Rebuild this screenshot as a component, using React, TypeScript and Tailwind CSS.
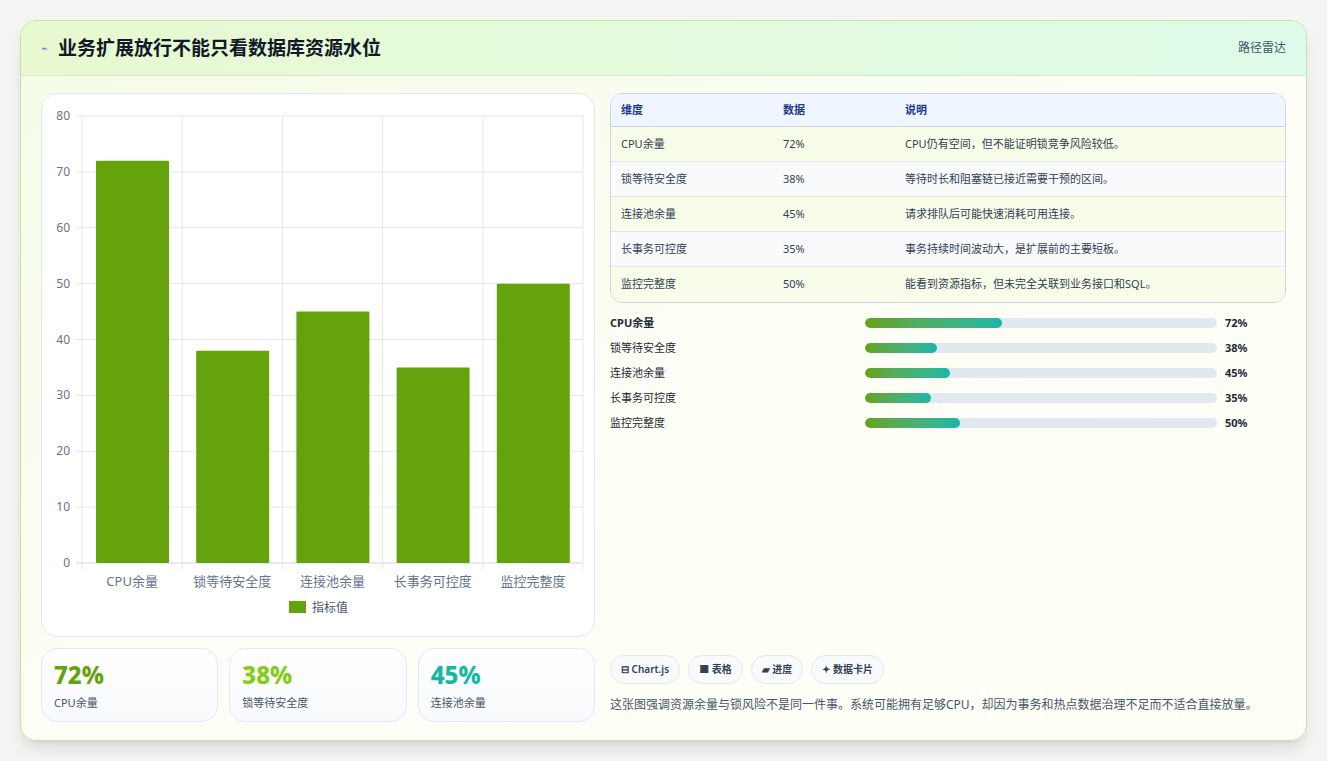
const font = { fontFamily: '"Noto Sans", "Noto Sans CJK SC", sans-serif' }

const data = [
  { name: 'CPU余量', v: 72, note: 'CPU仍有空间，但不能证明锁竞争风险较低。', w: 137 },
  { name: '锁等待安全度', v: 38, note: '等待时长和阻塞链已接近需要干预的区间。', w: 72 },
  { name: '连接池余量', v: 45, note: '请求排队后可能快速消耗可用连接。', w: 85 },
  { name: '长事务可控度', v: 35, note: '事务持续时间波动大，是扩展前的主要短板。', w: 66 },
  { name: '监控完整度', v: 50, note: '能看到资源指标，但未完全关联到业务接口和SQL。', w: 95 },
]

function Chart() {
  const x0 = 40, y0 = 22, w = 501, h = 447
  const cw = w / 5
  return (
    <svg width="554" height="543" className="block">
      {[0, 1, 2, 3, 4, 5, 6, 7, 8].map(i => {
        const y = y0 + h - (i * h) / 8
        return (
          <g key={i}>
            <line x1={x0 - 6} x2={x0 + w} y1={y} y2={y} stroke={i === 0 ? '#cbd5e1' : '#e5e7eb'} />
            <text x={x0 - 12} y={y + 4} fontSize="12" fill="#64748b" textAnchor="end">{i * 10}</text>
          </g>
        )
      })}
      {[0, 1, 2, 3, 4, 5].map(i => (
        <line key={i} x1={x0 + i * cw} x2={x0 + i * cw} y1={y0} y2={y0 + h + 6} stroke="#e5e7eb" />
      ))}
      {data.map((d, i) => {
        const bh = (d.v / 80) * h
        return (
          <g key={d.name}>
            <rect x={x0 + i * cw + 14} y={y0 + h - bh} width={73} height={bh} fill="#65a30d" rx="1" />
            <text x={x0 + i * cw + cw / 2} y={y0 + h + 23} fontSize="13" fill="#64748b" textAnchor="middle">{d.name}</text>
          </g>
        )
      })}
      <rect x="247" y="507" width="17" height="12" fill="#65a30d" />
      <text x="270" y="518" fontSize="12" fill="#475569">指标值</text>
    </svg>
  )
}

export default function App() {
  return (
    <div className="min-h-screen bg-[#f4f5f3] p-5" style={font}>
      <div className="h-[721px] rounded-2xl border border-[#c9e59a] bg-gradient-to-br from-[#f4fce6] via-[#fdfef6] to-[#fefff7] shadow-lg overflow-hidden flex flex-col">
        <div className="h-[55px] shrink-0 flex items-center justify-between px-5 bg-gradient-to-r from-[#e8f9d0] to-[#ddfbe9] border-b border-[#dbe7d3]">
          <div className="flex items-center gap-2.5">
            <span className="text-[11px] text-[#3b82f6]">⌁</span>
            <h1 className="text-[19px] font-bold text-[#111827]">业务扩展放行不能只看数据库资源水位</h1>
          </div>
          <span className="text-[12px] text-[#475569]">路径雷达</span>
        </div>
        <div className="flex gap-[15px] px-5 pt-[17px]">
          <div className="w-[554px] shrink-0 flex flex-col gap-[11px]">
            <div className="h-[544px] rounded-2xl border border-[#e2e8f0] bg-white overflow-hidden">
              <Chart />
            </div>
            <div className="grid grid-cols-3 gap-[11px]">
              {[
                ['72%', 'CPU余量', 'text-[#65a30d]'],
                ['38%', '锁等待安全度', 'text-[#84cc16]'],
                ['45%', '连接池余量', 'text-[#14b8a6]'],
              ].map(([v, l, c]) => (
                <div key={l} className="h-[74px] rounded-2xl border border-[#dbeafe] bg-gradient-to-b from-white to-[#f8fafc] px-3 pt-3">
                  <div className={`text-[24px] font-extrabold leading-7 ${c}`}>{v}</div>
                  <div className="text-[11px] text-[#475569] mt-1.5">{l}</div>
                </div>
              ))}
            </div>
          </div>
          <div className="flex-1 flex flex-col">
            <div className="rounded-xl border border-[#cbd5e1] overflow-hidden text-[11px]">
              <div className="h-[33px] flex items-center bg-[#eff6ff] border-b border-[#cbd5e1] text-[#1e3a8a] font-semibold px-[10px]">
                <span className="w-[162px]">维度</span>
                <span className="w-[122px]">数据</span>
                <span>说明</span>
              </div>
              {data.map((d, i) => (
                <div key={d.name} className={`h-[35px] flex items-center px-[10px] text-[#334155] ${i % 2 ? 'bg-[#f8fafc]' : 'bg-[#f7fde9]'} ${i < 4 ? 'border-b border-[#e2e8f0]' : ''}`}>
                  <span className="w-[162px]">{d.name}</span>
                  <span className="w-[122px]">{d.v}%</span>
                  <span>{d.note}</span>
                </div>
              ))}
            </div>
            <div className="mt-[12px] flex flex-col gap-[9px]">
              {data.map((d, i) => (
                <div key={d.name} className="h-4 flex items-center text-[11px] text-[#1f2937]">
                  <span className={`w-[255px] ${i === 0 ? 'font-bold' : ''}`}>{d.name}</span>
                  <div className="w-[352px] h-[10px] rounded-full bg-[#e2e8f0] overflow-hidden">
                    <div className="h-full rounded-full bg-gradient-to-r from-[#65a30d] to-[#14b8a6]" style={{ width: d.w }} />
                  </div>
                  <span className="ml-2 font-bold">{d.v}%</span>
                </div>
              ))}
            </div>
            <div className="mt-auto flex gap-2 pt-2" style={{ marginTop: 216 }}>
              {['⊟ Chart.js', '■ 表格', '▰ 进度', '✦ 数据卡片'].map(t => (
                <span key={t} className="h-[29px] px-[10px] flex items-center rounded-full border border-[#e2e8f0] bg-[#f8fafc] text-[10px] font-semibold text-[#334155]">{t}</span>
              ))}
            </div>
            <p className="mt-[10px] text-[12px] leading-[21px] text-[#475569]">这张图强调资源余量与锁风险不是同一件事。系统可能拥有足够CPU，却因为事务和热点数据治理不足而不适合直接放量。</p>
          </div>
        </div>
      </div>
    </div>
  )
}
